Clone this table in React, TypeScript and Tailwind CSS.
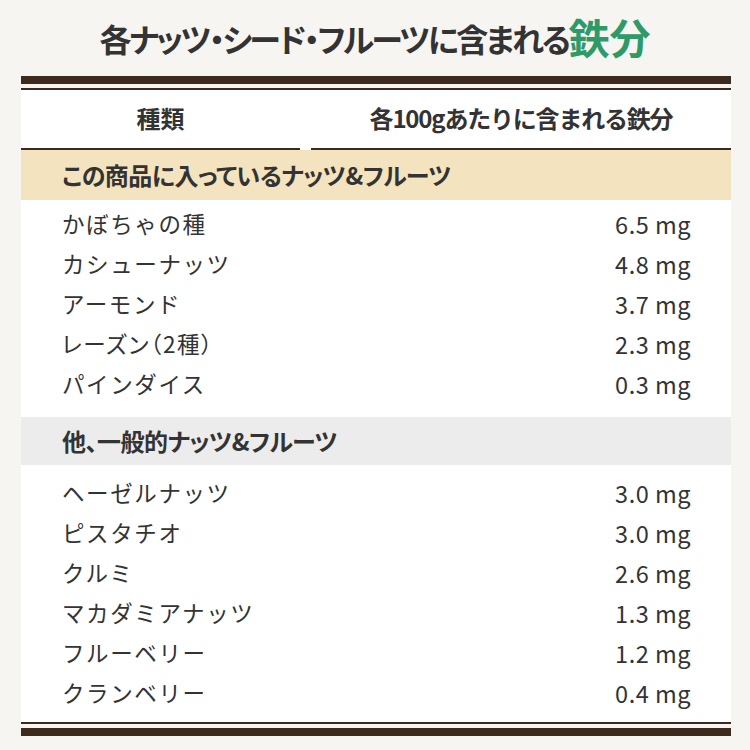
import React from "react";

const font = { fontFamily: '"Noto Sans CJK JP", "Noto Sans", sans-serif' };

const rows1 = [
  ["かぼちゃの種", "6.5 mg"],
  ["カシューナッツ", "4.8 mg"],
  ["アーモンド", "3.7 mg"],
  ["レーズン（2種）", "2.3 mg"],
  ["パインダイス", "0.3 mg"],
];
const rows2 = [
  ["ヘーゼルナッツ", "3.0 mg"],
  ["ピスタチオ", "3.0 mg"],
  ["クルミ", "2.6 mg"],
  ["マカダミアナッツ", "1.3 mg"],
  ["フルーベリー", "1.2 mg"],
  ["クランベリー", "0.4 mg"],
];

function Row({ name, value }: { name: string; value: string }) {
  const hasParen = name.includes("（");
  return (
    <div className="flex h-[40px] items-center justify-between pl-[41px] pr-[40px]">
      <span
        className="text-[22.5px] tracking-[1.6px] text-[#333]"
        style={hasParen ? { fontFeatureSettings: '"palt"' } : undefined}
      >
        {name}
      </span>
      <span className="text-[23.5px] tracking-[0.5px] text-[#333] pt-[2px]">{value}</span>
    </div>
  );
}

export default function App() {
  return (
    <div className="w-[750px] h-[750px] bg-[#f7f5f1] overflow-hidden" style={font}>
      <div className="h-[76px] flex items-center justify-center pb-[7px]">
        <h1 className="font-bold text-[32px] tracking-[-2.5px] text-[#333] leading-none flex items-end" style={{ fontFeatureSettings: '"palt"' }}>
          <span>各ナッツ・シード・フルーツに含まれる</span>
          <span className="text-[41px] text-[#2e9a68] tracking-[0px] leading-none -mb-[3px]">鉄分</span>
        </h1>
      </div>
      <div className="mx-[21px] w-[710px]">
        <div className="h-[8px] bg-[#3d2a1c]" />
        <div className="h-[4px]" />
        <div className="h-[2px] bg-[#3d2a1c]" />
        <div className="flex h-[58px] bg-white pb-[3px]">
          <div className="w-[279px] flex items-center justify-center font-bold text-[24px] text-[#333]">種類</div>
          <div className="w-[11px]" />
          <div className="flex-1 flex items-center justify-center font-bold text-[24px] text-[#333] tracking-[-1.2px]">各100gあたりに含まれる鉄分</div>
        </div>
        <div className="flex h-[2px]">
          <div className="w-[279px] bg-[#3d2a1c]" />
          <div className="w-[11px] bg-white" />
          <div className="flex-1 bg-[#3d2a1c]" />
        </div>
        <div className="h-[50px] bg-[#f3e3bf] flex items-center pl-[41px]">
          <span className="font-bold text-[24px] text-[#333] tracking-[-0.5px]" style={{ fontFeatureSettings: '"palt"' }}>この商品に入っているナッツ&amp;フルーツ</span>
        </div>
        <div className="bg-white pt-[4px] pb-[13px]">
          {rows1.map(([n, v]) => (
            <Row key={n} name={n} value={v} />
          ))}
        </div>
        <div className="h-[48px] bg-[#ececec] flex items-center pl-[41px]">
          <span className="font-bold text-[24px] text-[#333] tracking-[-0.5px]" style={{ fontFeatureSettings: '"palt"' }}>他、一般的ナッツ&amp;フルーツ</span>
        </div>
        <div className="bg-white pt-[8px] pb-[9px]">
          {rows2.map(([n, v]) => (
            <Row key={n} name={n} value={v} />
          ))}
        </div>
        <div className="h-[2px] bg-[#3d2a1c]" />
        <div className="h-[4px]" />
        <div className="h-[8px] bg-[#3d2a1c]" />
      </div>
    </div>
  );
}
